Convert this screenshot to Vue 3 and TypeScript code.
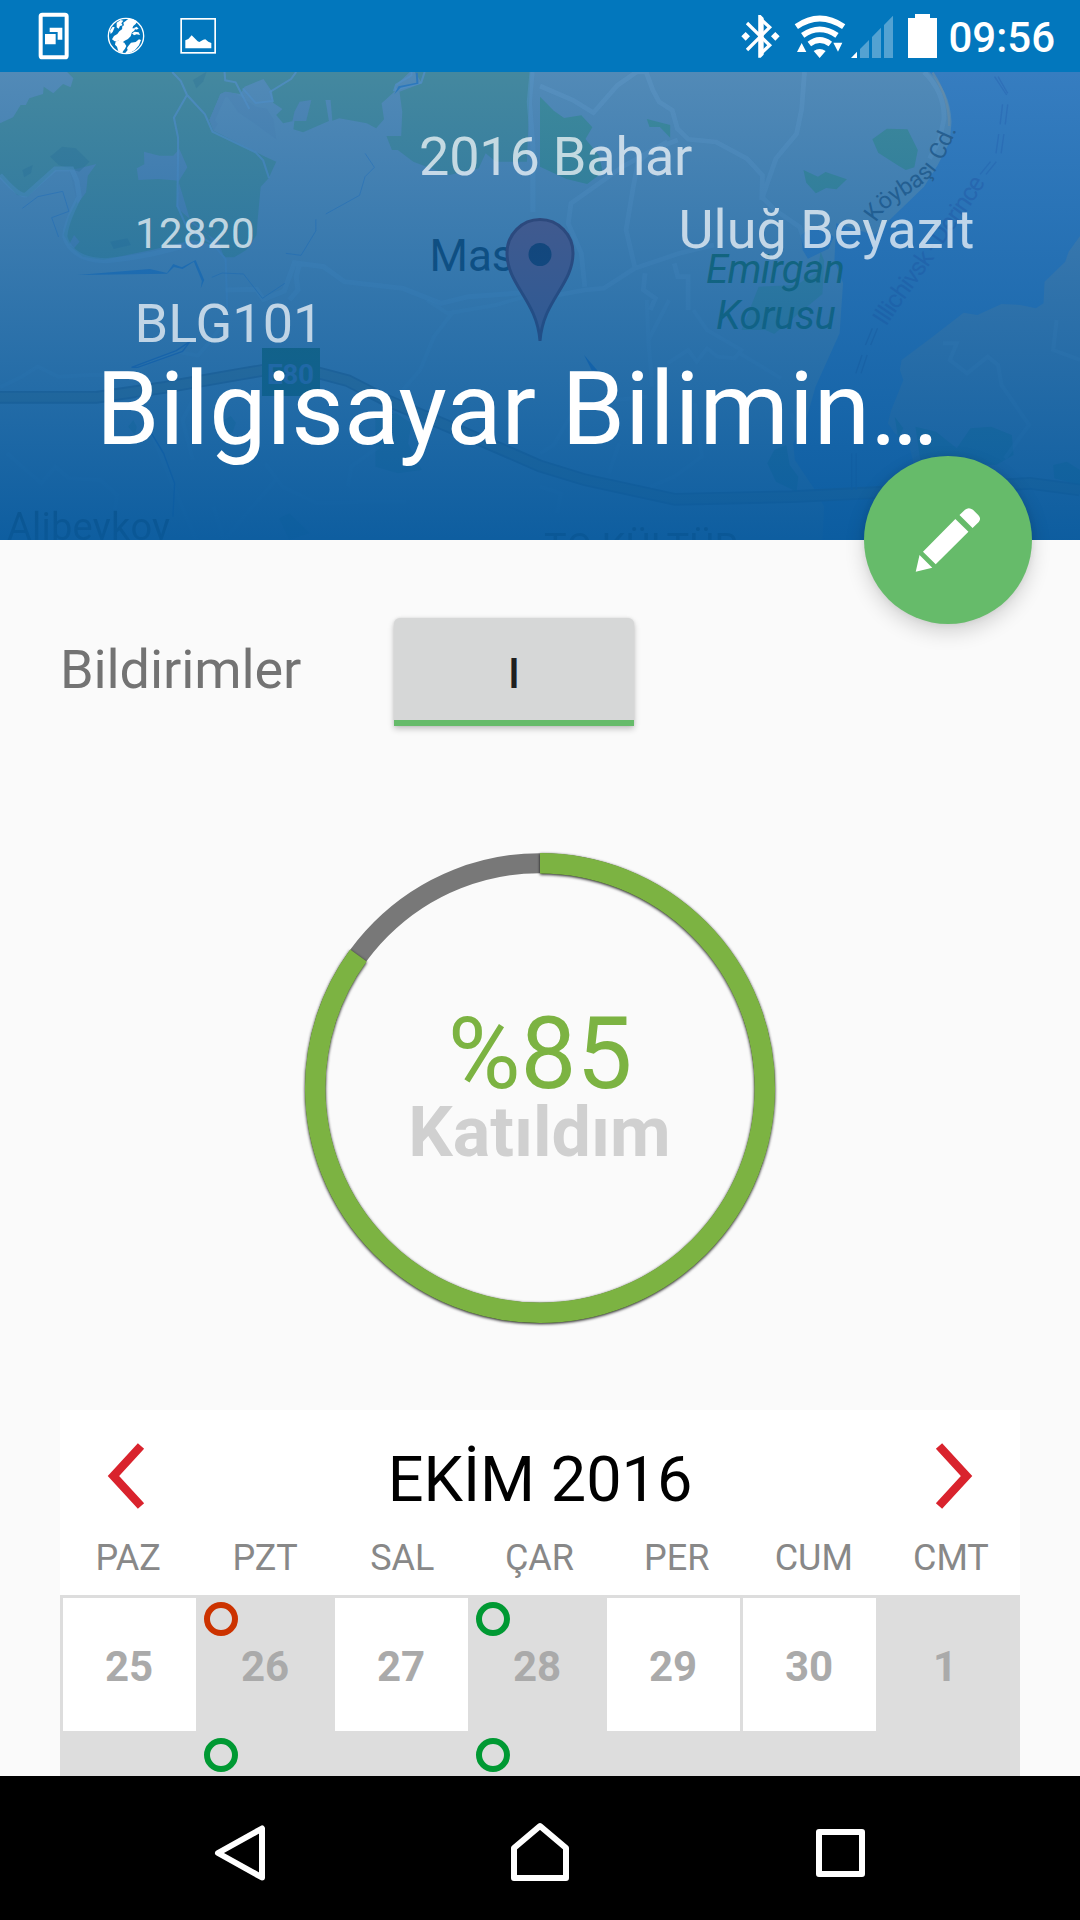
<script setup lang="ts">
interface Day {
  label: string
  marked: boolean
  dot?: 'red' | 'green'
}

const weekdays: string[] = ['PAZ', 'PZT', 'SAL', 'ÇAR', 'PER', 'CUM', 'CMT']

const days: Day[] = [
  { label: '25', marked: false },
  { label: '26', marked: true, dot: 'red' },
  { label: '27', marked: false },
  { label: '28', marked: true, dot: 'green' },
  { label: '29', marked: false },
  { label: '30', marked: false },
  { label: '1', marked: true },
  { label: '', marked: true },
  { label: '', marked: true, dot: 'green' },
  { label: '', marked: true },
  { label: '', marked: true, dot: 'green' },
  { label: '', marked: true },
  { label: '', marked: true },
  { label: '', marked: true },
]

const attendance = 85
const radius = 224.8
const circumference = 2 * Math.PI * radius
const attendedDash = `${(circumference * attendance) / 100} ${circumference}`
</script>

<template>
  <div class="screen">
    <header class="status">
      <div class="status-side left">
        <svg class="w67" viewBox="100 0 200 216">
          <rect x="123" y="44" width="78" height="128" rx="5" fill="none" stroke="#fff" stroke-width="12" />
          <path d="M136 102h32v31h-32zM150 83h38v36h-14V96h-24z" fill="#fff" />
        </svg>
        <svg class="w67" viewBox="300 0 200 216">
          <circle cx="378" cy="108" r="53" fill="none" stroke="#fff" stroke-width="4" />
          <g fill="#fff">
            <path d="M386 56l12 1 14 7-5 8-7 6-3 7 10 0-5 8-6 4-4 12-8 8-10 5-6 5-6-2-6-3-12 2-8-6 6-10 10-6 6-8 8-6 6-12-2-8z" />
            <path d="M347 124l12-2 14 6 6 10-4 8-6 8-2 6-12-6-4-14-6-6zM385 138l8-10 14-2 10-8 6 2-6 16-12 14-14 8-16 2 8-10-2-6z" />
            <path d="M396 100l8-5 12 2 4 8-10-2-8 3zM402 84l8-4 6 6-8 3zM350 68l12-8 8 2-6 8 4 6-8 2-4 8-6-4zM330 92l8-12 6 2-6 14-6 6zM366 80l6-4 2 6-6 6z" />
          </g>
        </svg>
        <svg class="w67" viewBox="500 0 200 216">
          <rect x="542.500" y="56.500" width="102" height="102" fill="none" stroke="#fff" stroke-width="5" />
          <path d="M555 145v-24l9-4 10-11 18 18 5 2 12-7 6-1 9 7 9 4v16z" fill="#fff" />
        </svg>
      </div>
      <div class="status-side">
        <svg class="w47" viewBox="60 0 140 216">
          <path d="M81 69l68 67-28 26V56l28 26-68 68" fill="none" stroke="#fff" stroke-width="10" />
          <path d="M115 45h7l9 9v110l-9 9h-7zM64 109l13-13 13 13-13 13zM153 109l13-13 13 13-13 13z" fill="#fff" />
        </svg>
        <svg class="w63" viewBox="200 0 190 216">
          <g fill="none" stroke="#fff" stroke-width="17">
            <path d="M228 80Q298 31 370 80" />
            <path d="M247 106Q298 70 350 106" />
            <path d="M267 132Q298 108 330 132" />
          </g>
          <path d="M280 153Q298 141 316 153L298 174zM230 156l14-27 14 27zM339 128h27l-13 27z" fill="#fff" />
        </svg>
        <svg class="w50" viewBox="390 0 150 216">
          <path d="M393 174l18-19v19z" fill="#fff" />
          <path d="M420 174v-27l27-27v54zM456 174v-63l27-28v91zM492 174V75l27-28v127z" fill="#fff" opacity=".32" />
        </svg>
        <svg class="w43" viewBox="540 0 130 216">
          <path d="M564 54h21V42h45v12h21v120h-87z" fill="#fff" />
        </svg>
        <span class="time">09:56</span>
      </div>
    </header>

    <section class="hero">
      <svg class="map" viewBox="0 72 1080 468" preserveAspectRatio="none">
        <defs>
          <linearGradient id="scrim" x1="0" y1="0" x2="0" y2="1">
            <stop offset="0" stop-color="#085a9e" stop-opacity="0" />
            <stop offset="1" stop-color="#085a9e" stop-opacity=".92" />
          </linearGradient>
        </defs>
        <rect y="72" width="1080" height="468" fill="#528ab7" />

        <!-- north-west: forest and lake -->
        <g transform="translate(0 60) scale(.3444 .33333)">
          <path
            d="M0 190L38 172 60 135 75 135 85 115 125 102 127 80 155 100 183 72 205 82 213 55 195 36H1190L1150 75 1145 95 1108 130 1115 178 1092 205 1065 190 985 175 965 182 960 120H945L955 183 880 217 852 208 855 182 822 190 802 165 820 147 793 128 790 95 765 57 710 80 698 102 655 95 640 102 608 180 620 212 770 290 802 305 780 355 757 380 748 480 745 525 715 570 680 592H655L620 555 560 540 440 570 345 590 300 600 240 590 205 560 185 525 200 470 230 410 225 370 210 330H160L80 410 50 405 0 350z"
            fill="#44889f"
          />
          <path d="M655 95l-15 7-32 78 12 32 12-20-8-12 30-68 8 0 30 45 50 35 55 42 5 4-8-60-20-32-30-5-60-40z" fill="#5087b5" />
          <path d="M1205 36H1540L1530 305H1440L1410 280 1390 325 1305 345 1250 325 1200 305 1155 270H1138L1122 228H1165L1168 155 1160 95 1225 70z" fill="#44889f" />
          <path d="M418 275l45 12h40l18-20 23 55-24 40-60-5-58 3-5-35 22-12zM200 330l30-5 50-13-25 35-5 50-25 35-20-90zM215 525l16 20-16 20-15-10zM520 370l35 120 80 55 15 45-50-70-68-60-20-20z" fill="#5087b5" />
          <path d="M855 155l15-30 34-5-15 63h-40z" fill="#5087b5" />
          <path d="M65 330l30-15-5 25-20 12zM145 290l35-30 40 5 40 40-30 30-60-20zM560 60l40-25-10 30-20 20zM320 545l50-10 10 20-50 12z" fill="#33789a" opacity=".45" />
          <g fill="none" stroke="#528fc4" stroke-width="6" opacity=".8">
            <path d="M500 36l25 27 18 42-38 68 12 60v45l-2 160 30 70 75 45 35 45 5 152M543 105l52 58 22 52 125 62 22 24 17 53M652 36l2 25 30 6 40 80M705 85l37 44 50-6-7-28 60-38 15-21M1195 36v10l-45 28-5 16 78-22 10-32" />
          </g>
          <path d="M1545 36l-8 90 10 130v200M0 345q55 65 75 60l85-78h48l15 35 7 48q-40 80-42 120 20 70 118 72 120-10 230-45M655 690l90-2 20 30 60-25 30-85 85 12 60 45 170 20 110 45 80-20 200-15M870 610l-10 40 5 40-25 30" fill="none" stroke="#5794c5" stroke-width="15" opacity=".55" />
          <path d="M1060 280l27 42-27 28-16 56-98 56M917 478v35l-43 73-44-6M615 652l30-13 62 3 55 73 65-45M65 445l45-35 72-16 18 60-50 19 20 58" fill="none" stroke="#387bbc" stroke-width="2.500" />
          <path d="M225 645l210-18 50 12 18-27 25 10 40-22 25 60-10 25 3-22-23-58-33 22-25-6-20 20z" fill="#2b77bd" />
          <path d="M1145 103l12-24 52-11-2-30 6 0 2 33-52 12z" fill="#2d79bd" />
        </g>

        <!-- north-east: strait and park -->
        <g transform="translate(540 60) scale(.3444 .33333)">
          <path
            d="M1130 36Q1190 90 1195 185L1190 245 1155 315 1115 380 1070 425 970 525 860 490 855 600 880 670 870 820 800 980 770 1090 735 1150 740 1200 795 1285 825 1340 820 1440H1568V36z"
            fill="#367dc0"
          />
          <path d="M758 525l30-22 35 0 30 28-15 35-60 30-15-25z" fill="#367dc0" />
          <path
            d="M1568 528L1535 575 1525 605 1465 665 1462 730 1440 745 1395 735 1340 732 1270 765 1230 758 1140 830 1050 900 1045 930 1055 960 1020 1050 1010 1090 1030 1120 1070 1150 1100 1270 1200 1440H1568z"
            fill="#4d84b4"
          />
          <path d="M0 110l40 42 30 22 50-8 32 36-20 35 40 50 10 50-45 35-60-15L0 320zM310 177l68 18v38l-30-32h-30zM965 238l42-32 60 2 30 62-10 52-25 8-20-12-60-40zM765 330l42 20 22-14 62 22-30 30-30-4-30 16-28-32z" fill="#3f8a9b" />
          <path d="M815 575l-10 60-60 40-110 5-50 130h70l25 12 140-120 5-100z" fill="#3f8a9b" opacity=".75" />
          <path d="M1140 38q50 80 48 160" fill="none" stroke="#7190a4" stroke-width="7" opacity=".6" />
          <g fill="none" stroke="#5c96c5" stroke-width="14" opacity=".55">
            <path d="M0 78l95 42 60 38 70-82 55-40h28l20 55 18 35 38 25 15 55 32 32 80 8 90 50 45 50-2 65 40 40 70 50 20 60M768 36l-8 110-15 75-60 75-22 65-20 60M400 240l-75 30-40 35-15 80-20 125 25 110M370 245l-130 75-150 110-8 60 38 90 10 100M0 715l130-25 55-5 90-60 130-45 100-25M305 640l-5 50 35 25-15 35M390 610l10 40h30v100M1115 36q60 60 58 140l-12 60-30 60" />
          </g>
          <path d="M1320 50l35 55M1330 50l28 50M1343 133l-7 60M1358 133l-7 60M1332 222l-8 58M1347 222l-8 58M1308 305l-30 38M1325 305l-30 38" stroke="#3071b9" stroke-width="4" fill="none" />
        </g>

        <!-- south-west: motorway -->
        <g transform="translate(0 300) scale(.3444 .33333)">
          <path d="M0 292h280L480 262 700 222 800 205 900 212 1010 242 1120 300 1350 400 1568 498 1700 540 1960 598 2300 590 2600 575 2990 550 3136 570" fill="none" stroke="#3a6c94" stroke-width="38" />
          <path d="M0 292h280L480 262 700 222 800 205 900 212 1010 242 1120 300 1350 400 1568 498 1700 540 1960 598 2300 590 2600 575 2990 550 3136 570" fill="none" stroke="#497c9b" stroke-width="27" />
          <path d="M650 360l20-12 15 20-10 30-25 10zM372 380l15-20 10 20-5 25zM1090 350l60-10 45 30-10 60 40 80-70 10-65-20zM810 655l30-15 60 60-60 20z" fill="#2b7992" opacity=".45" />
          <path d="M0 262l60-30 50-32 60 30 90-5 120 0 60-40 75-30 60 12 40-50 30-40M400 290l40 110 60 150 70 170M560 300l-30 60 30 120M20 460l100 90 40-50 40 35 90 5 50 45-10 70M770 490l50 70 100 50 140-5 120 0M620 620l30 100 150-180M1100 440l-80 60-10 60M1320 30l-60 80-40 100-50 60M1240 0l60 40 140-25 100-30" fill="none" stroke="#5893c2" stroke-width="12" opacity=".4" />
          <path d="M382 202l130-50 40-28-22 30-130 48zM440 400l35 60 32 90-5 100" fill="none" stroke="#2b6fb8" stroke-width="4" />
        </g>

        <!-- south-east -->
        <g transform="translate(540 300) scale(.3444 .33333)">
          <path d="M680 450l35-15 10 60 25 35-5 45-60-30-25-55zM1090 380l60 15 60 50 40-60 60-5 60 25 5 60-50 30-220-10zM1490 495l40-10 38 25v45l-75-20zM1030 350l25 35-15 30z" fill="#277c92" opacity=".6" />
          <path d="M128 165l40 48-18-2z" fill="#236db8" />
          <g fill="none" stroke="#5b94c2" stroke-width="12" opacity=".4">
            <path d="M310 0l5 130 10 100M375 0l-60 120 10 140M370 190l60-40 25 35 30-40 30 25 50 5 20-25-100-60-40-60M580 160l120 75M450 310l20 160-80 60-70 30M0 460l40-25 50-90 80-40 140-15M200 520l30-90M1170 130l40 0-20 50 50 40 60-50 30 25 10 60 80 120-70 100M1500 60l-10 90 78 30M0 560l60 20-10 60M730 340l20 60" />
          </g>
          <path d="M965 85l-20 50M980 85l-20 50M935 165l-18 55M950 165l-18 55M905 460v110M918 460v110" stroke="#2f6db0" stroke-width="4" fill="none" />
        </g>

        <rect x="262" y="348" width="58" height="48" fill="#1d6b73" />
        <g class="labels">
          <text x="267" y="383.500" font-size="28" font-weight="700" fill="#417bb1" textLength="47">E80</text>
          <text x="429.500" y="270.700" font-size="44" fill="#124974">Mas</text>
          <g font-size="40" font-style="italic" fill="#186a6e">
            <text x="706" y="283" textLength="139">Emirgan</text>
            <text x="716" y="329" textLength="120">Korusu</text>
          </g>
          <path id="road" d="M876 223C887 203 903 199 921 185S943 162 960 122" fill="none" />
          <path id="ferry" d="M886 327C903 300 923 276 938 252S974 205 991 172" fill="none" />
          <text font-size="23.500" word-spacing="3" fill="#2b608e"><textPath href="#road">Köybaşı Cd.</textPath></text>
          <text font-size="25" fill="#306bb4"><textPath href="#ferry" textLength="176">Illichivsk - Derince</textPath></text>
          <g font-size="38" fill="#081e1e" opacity=".7">
            <text x="7" y="540" textLength="163">Alibeykoy</text>
            <text x="544" y="561" textLength="194">TC KÜLTÜR</text>
          </g>
        </g>
        <path d="M540 341C537 300 507 285 507 253a33 33.500 0 0 1 66 0C573 285 543 300 540 341z" fill="#575a89" stroke="#3c426f" stroke-width="3" />
        <circle cx="540" cy="254.500" r="11.500" fill="#183d6c" />
        <rect y="72" width="1080" height="468" fill="url(#scrim)" />
      </svg>

      <div class="hero-text">
        <div class="semester">2016 Bahar</div>
        <div class="row">
          <span class="crn">12820</span>
          <span>Uluğ Beyazıt</span>
        </div>
        <div class="code">BLG101</div>
        <h1>Bilgisayar Bilimin…</h1>
      </div>

      <button class="fab" aria-label="Düzenle">
        <svg viewBox="864 456 168 168">
          <g transform="translate(540 300) scale(.3444 .33333)" fill="#fff">
            <path d="M1218 645l16-16q11-9 23 0l16 17q9 10 1 20l-18 18zM1206 657l38 38-95 98-37-38zM1102 765l37 38-48 12z" />
          </g>
        </svg>
      </button>
    </section>

    <main>
      <div class="notify">
        <span class="notify-label">Bildirimler</span>
        <button class="toggle">I</button>
      </div>

      <div class="ring">
        <svg viewBox="0 0 500 500">
          <circle cx="250" cy="250" :r="radius" fill="none" stroke="#787878" stroke-width="20" />
          <g class="ring-shadow">
            <circle
              cx="250"
              cy="250"
              :r="radius"
              fill="none"
              stroke="#7cb342"
              stroke-width="20.500"
              :stroke-dasharray="attendedDash"
              transform="rotate(-90 250 250)"
            />
          </g>
        </svg>
        <div class="ring-text">
          <div class="percent">%{{ attendance }}</div>
          <div class="caption">Katıldım</div>
        </div>
      </div>

      <div class="calendar">
        <div class="cal-head">
          <svg viewBox="0 0 36 66"><path d="M33 3L5.500 33 33 63" /></svg>
          <span>EKİM 2016</span>
          <svg viewBox="0 0 36 66"><path d="M3 3l27.500 30L3 63" /></svg>
        </div>
        <div class="weekdays">
          <span v-for="w in weekdays" :key="w">{{ w }}</span>
        </div>
        <div class="grid">
          <div v-for="(d, i) in days" :key="i" class="day" :class="{ marked: d.marked }">
            <i v-if="d.dot" class="dot" :class="d.dot"></i>
            {{ d.label }}
          </div>
        </div>
      </div>
    </main>

    <nav>
      <svg viewBox="0 0 72 72"><path d="M58 16.500v49L14 41z" /></svg>
      <svg viewBox="0 0 72 72"><path d="M36 14L62 36V66H10V36z" /></svg>
      <svg viewBox="0 0 72 72"><path d="M15 20h43v42H15z" /></svg>
    </nav>
  </div>
</template>

<style>
body {
  margin: 0;
  background: #000;
}
</style>

<style scoped>
.screen {
  width: 1080px;
  height: 1920px;
  display: flex;
  flex-direction: column;
  overflow: hidden;
  background: #fafafa;
  font-family: Roboto, sans-serif;
}
.status {
  flex: none;
  height: 72px;
  box-sizing: border-box;
  padding: 0 25px 0 33.300px;
  display: flex;
  justify-content: space-between;
  background: #0277bd;
}
.status-side {
  display: flex;
}
.status svg {
  height: 72px;
}
.w67 { width: 66.670px; }
.w47 { width: 46.670px; }
.w63 { width: 63.330px; }
.w50 { width: 50px; }
.w43 { width: 43.330px; }
.time {
  margin-left: 5px;
  font-size: 42px;
  font-weight: 500;
  line-height: 75px;
  color: #fff;
}
.hero {
  flex: none;
  position: relative;
  z-index: 1;
  height: 468px;
}
.map {
  display: block;
  width: 1080px;
  height: 468px;
}
.labels {
  font-family: Roboto, sans-serif;
}
.hero-text {
  position: absolute;
  inset: 0;
  padding-top: 52.500px;
  color: rgba(255, 255, 255, 0.7);
  font-size: 54px;
  line-height: 64px;
}
.semester {
  padding-left: 419px;
  letter-spacing: -0.2px;
}
.row {
  display: flex;
  justify-content: space-between;
  align-items: baseline;
  margin-top: 9px;
  padding: 0 105.500px 0 135px;
}
.crn {
  font-size: 42px;
  letter-spacing: 0.4px;
}
.code {
  margin-top: 30px;
  padding-left: 134.500px;
  line-height: 56px;
}
h1 {
  margin: 2.500px 0 0;
  padding-left: 96px;
  font-size: 102px;
  font-weight: 400;
  line-height: 110px;
  color: #fff;
  white-space: nowrap;
}
.fab {
  position: absolute;
  right: 48px;
  bottom: -84px;
  width: 168px;
  height: 168px;
  padding: 0;
  border: 0;
  border-radius: 50%;
  background: #66bb6a;
  box-shadow: 0 8px 20px rgba(0, 0, 0, 0.16), 0 0 6px rgba(0, 0, 0, 0.08);
}
.fab svg {
  display: block;
  width: 168px;
  height: 168px;
}
main {
  flex: 1;
  min-height: 0;
  overflow: hidden;
  padding: 78px 60px 0;
}
.notify {
  display: flex;
  align-items: flex-start;
}
.notify-label {
  width: 334px;
  padding-top: 19.500px;
  font-size: 54px;
  letter-spacing: -0.1px;
  line-height: 64px;
  color: #737373;
}
.toggle {
  width: 240px;
  height: 108px;
  padding: 8px 0 0;
  border: 0;
  border-bottom: 6px solid #66bb6a;
  border-radius: 6px 6px 0 0;
  background: #d6d7d7;
  color: #1f1f1f;
  font: 500 42px Roboto, sans-serif;
  box-shadow: 0 3px 6px rgba(0, 0, 0, 0.22), 0 0 3px rgba(0, 0, 0, 0.1);
}
.ring {
  display: grid;
  justify-content: center;
  margin-top: 112px;
}
.ring > * {
  grid-area: 1 / 1;
  width: 500px;
  height: 500px;
}
.ring-shadow {
  filter: drop-shadow(0 1.500px 1.500px rgba(0, 0, 0, 0.9));
}
.ring-text {
  text-align: center;
}
.percent {
  padding-top: 155.500px;
  font-size: 99.500px;
  line-height: 120px;
  color: #7cb342;
}
.caption {
  margin-top: -21.500px;
  font-size: 70px;
  font-weight: 700;
  line-height: 80px;
  text-indent: -1px;
  color: #d0d0d0;
}
.calendar {
  margin-top: 72px;
  background: #fff;
}
.cal-head {
  display: flex;
  justify-content: space-between;
  align-items: flex-start;
  height: 125px;
  box-sizing: border-box;
  padding: 33px 48px 0;
  font-size: 63px;
  line-height: 73px;
}
.cal-head svg {
  width: 36px;
  height: 66px;
  overflow: visible;
}
.cal-head path {
  fill: none;
  stroke: #d9232d;
  stroke-width: 8.500;
}
.weekdays {
  display: grid;
  grid-template-columns: repeat(7, 1fr);
  height: 60px;
  padding-top: 0.500px;
  box-sizing: border-box;
  font-size: 36px;
  line-height: 45px;
  text-align: center;
  text-indent: -1px;
  color: #888;
}
.grid {
  display: grid;
  grid-template-columns: repeat(7, 133px);
  grid-auto-rows: 133px;
  gap: 3px;
  padding: 3px;
  background: #ddd;
}
.day {
  position: relative;
  background: #fff;
  color: #aaa;
  font-size: 42px;
  font-weight: 700;
  line-height: 137px;
  text-align: center;
  text-indent: -1px;
}
.day.marked {
  background: #ddd;
}
.dot {
  position: absolute;
  top: 3.500px;
  left: 5px;
  width: 22px;
  height: 22px;
  border: 6px solid #009933;
  border-radius: 50%;
}
.dot.red {
  border-color: #cc3300;
}
nav {
  flex: none;
  height: 144px;
  display: flex;
  justify-content: center;
  align-items: center;
  gap: 228px;
  background: #000;
}
nav svg {
  width: 72px;
  height: 72px;
}
nav path {
  fill: none;
  stroke: #fff;
  stroke-width: 6;
  stroke-linejoin: round;
}
</style>
